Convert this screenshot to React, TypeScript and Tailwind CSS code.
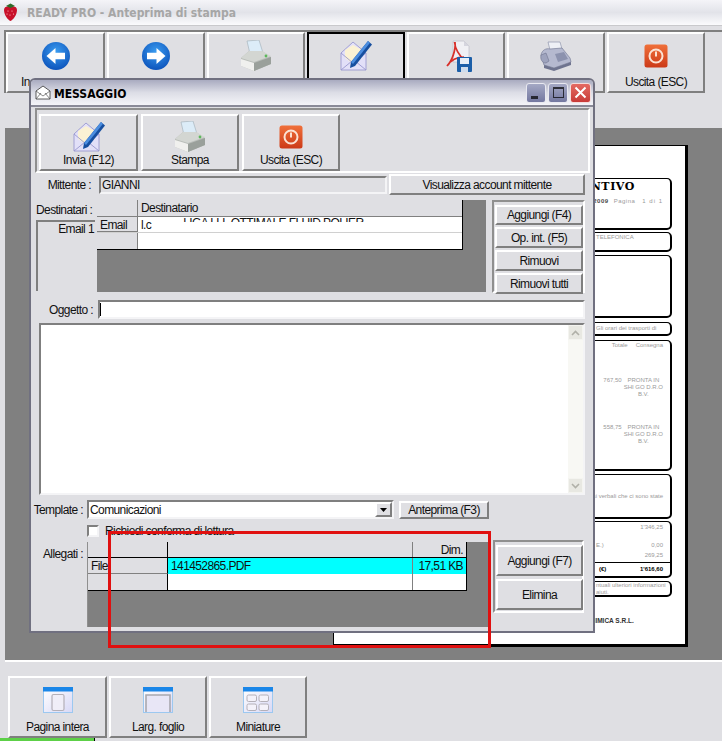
import React from "react";

const raised = "border-2 border-t-white border-l-white border-r-[#7f7f7f] border-b-[#7f7f7f] bg-[#dfdfe3]";
const sunken = "border-2 border-t-[#7f7f7f] border-l-[#7f7f7f] border-r-[#f4f4f6] border-b-[#f4f4f6]";

function Arrow({ dir }: { dir: "left" | "right" }) {
  return (
    <svg width="30" height="30" viewBox="0 0 30 30">
      <defs>
        <radialGradient id={"ag" + dir} cx="50%" cy="35%" r="70%">
          <stop offset="0" stopColor="#3a9cf0" />
          <stop offset="1" stopColor="#0a4fb8" />
        </radialGradient>
      </defs>
      <circle cx="15" cy="15" r="14" fill={"url(#ag" + dir + ")"} />
      <g transform={dir === "right" ? "matrix(-1 0 0 1 30 0)" : undefined}>
        <path d="M5.5 15 L14.5 7 V11.8 H24 V18.2 H14.5 V23 Z" fill="#fff" />
      </g>
    </svg>
  );
}

function Printer() {
  return (
    <svg width="32" height="32" viewBox="0 0 32 32">
      <path d="M7 1 L19 0 L23 13 L10 14 Z" fill="#dcecf8" stroke="#a8b4bd" strokeWidth="0.7" />
      <path d="M1 18 L9 11 H22 L31 17 V24 L14 31 L1 26 Z" fill="#b9bdb9" />
      <path d="M1 18 L14 22 L31 16 L22 11 H9 Z" fill="#d3d6d2" />
      <path d="M1 19 L14 23 V31 L1 26 Z" fill="#f0f0ee" />
      <path d="M14 23 L31 17 V24 L14 31 Z" fill="#9aa09b" />
      <circle cx="26" cy="16" r="1.4" fill="#5cb85c" />
    </svg>
  );
}

function MailPen() {
  return (
    <svg width="32" height="32" viewBox="0 0 32 32">
      <path d="M1 13 L13 2 L26 13 V30 H1 Z" fill="#e2e0f8" stroke="#9a98cf" strokeWidth="0.9" />
      <path d="M5 10 L13 5 L22 10 V18 L13 24 L5 18 Z" fill="#fbf2d4" />
      <path d="M1 13 L13 23 L26 13" fill="none" stroke="#9a98cf" strokeWidth="0.9" />
      <path d="M1 30 L12 21 M26 30 L15 21" stroke="#9a98cf" strokeWidth="0.9" />
      <path d="M28 1 L32 4.5 L15 26 L10 28 L11 22 Z" fill="#174f9f" />
      <path d="M28 1 L30 2.8 L13 24 L11 22 Z" fill="#4c8ee0" />
    </svg>
  );
}

function Power() {
  return (
    <svg width="24" height="24" viewBox="0 0 24 24">
      <defs>
        <linearGradient id="pw" x1="0" y1="0" x2="0" y2="1">
          <stop offset="0" stopColor="#f0703a" />
          <stop offset="1" stopColor="#cc3a18" />
        </linearGradient>
      </defs>
      <rect x="0.5" y="0.5" width="23" height="23" rx="2.5" fill="url(#pw)" />
      <circle cx="12" cy="12" r="6.5" fill="none" stroke="#fbe2d4" strokeWidth="2" />
      <path d="M12 7.5 V12.5" stroke="#fbe2d4" strokeWidth="2" />
    </svg>
  );
}

function Pdf() {
  return (
    <svg width="26" height="32" viewBox="0 0 26 32" className="ml-[6px]">
      <path d="M7 1 H18 L23 6 V22 H7 Z" fill="#f0f0f4" stroke="#c2c2cc" strokeWidth="0.8" />
      <path d="M18 1 V6 H23 Z" fill="#d5d5de" />
      <path d="M8.5 2 C9 8 13 16 18 19 M1 26 C5 20 11 17 18 17 M9 2 C10 10 6 21 1 26" fill="none" stroke="#d8302a" strokeWidth="1.7" />
      <rect x="11" y="17" width="15" height="15" rx="1" fill="#1c5fa8" />
      <rect x="14" y="18" width="9" height="6" fill="#e8eef6" />
      <rect x="15" y="27" width="7" height="5" fill="#cfdcec" />
    </svg>
  );
}

function Fax() {
  return (
    <svg width="32" height="30" viewBox="0 0 32 30">
      <path d="M8 1 L20 1 L22 8 L10 9 Z" fill="#eef0f6" stroke="#9096ae" strokeWidth="0.7" />
      <path d="M1 14 C2 9 6 7 10 8 L22 7 L30 17 L31 21 L14 27 L4 24 Z" fill="#b5b9cf" stroke="#7a7f9a" strokeWidth="0.7" />
      <path d="M4 24 L14 27 L31 21 V24 L14 30 L4 27 Z" fill="#6f748f" />
      <path d="M15 13 L24 11 L28 18 L18 21 Z" fill="#8c92ae" />
      <path d="M1 14 C0 18 2 22 6 22 L9 20 L6 12 Z" fill="#9ea3bd" stroke="#6f748f" strokeWidth="0.6" />
    </svg>
  );
}

function Strawberry() {
  return (
    <svg width="15" height="19" viewBox="0 0 15 19">
      <path d="M1 7 C1 3 5 3 7.5 4 C10 3 14 3 14 7 C14 12 10 17 7.5 18 C5 17 1 12 1 7 Z" fill="#c8102a" />
      <path d="M3 3 L7.5 0.5 L12 3 L7.5 5 Z" fill="#2f6a28" />
      <circle cx="5" cy="8" r="0.6" fill="#ffc6c6" /><circle cx="9" cy="8" r="0.6" fill="#ffc6c6" />
      <circle cx="7" cy="12" r="0.6" fill="#ffc6c6" /><circle cx="10.5" cy="11" r="0.6" fill="#ffc6c6" />
      <circle cx="4" cy="11" r="0.6" fill="#ffc6c6" />
    </svg>
  );
}

function MailSmall() {
  return (
    <svg width="16" height="16" viewBox="0 0 16 16">
      <path d="M1 6 L8 1 L15 6 V14 H1 Z" fill="#fff" stroke="#333" strokeWidth="0.8" />
      <path d="M1 14 L6 8 M15 14 L10 8 M1 6 L8 11 L15 6" fill="none" stroke="#555" strokeWidth="0.7" />
    </svg>
  );
}

function Layout({ kind }: { kind: "page" | "width" | "thumb" }) {
  return (
    <svg width="30" height="26" viewBox="0 0 30 26">
      <defs>
        <linearGradient id={"lg" + kind} x1="0" y1="0" x2="1" y2="1">
          <stop offset="0" stopColor="#fff" />
          <stop offset="1" stopColor="#d8d8f6" />
        </linearGradient>
      </defs>
      <rect x="0.5" y="0.5" width="29" height="25" fill={"url(#lg" + kind + ")"} stroke="#9cc8f0" />
      <rect x="0" y="0" width="30" height="4.5" fill="#1a86e8" />
      {kind === "page" && <rect x="9" y="7.5" width="12" height="16" rx="1.5" fill="#f0eef8" stroke="#b4b0b8" strokeWidth="1.2" />}
      {kind === "width" && <path d="M3 25 V8 H27 V25" fill="#e8e6f6" stroke="#a8a8ae" strokeWidth="1.6" />}
      {kind === "thumb" && (
        <g fill="#f4f2fa" stroke="#b4b0b8" strokeWidth="1">
          <rect x="4" y="8" width="9.5" height="6.5" rx="1.5" />
          <rect x="16" y="8" width="9.5" height="6.5" rx="1.5" />
          <rect x="4" y="17" width="9.5" height="6.5" rx="1.5" />
          <rect x="16" y="17" width="9.5" height="6.5" rx="1.5" />
        </g>
      )}
    </svg>
  );
}

function ToolBtn({ w, label, icon, active, iconH = "h-[34px]" }: { w: string; label?: string; icon: React.ReactNode; active?: boolean; iconH?: string }) {
  return (
    <div className={`${w} h-full flex flex-col items-center justify-between pt-[5px] pb-[2px] ${active ? "border-2 border-t-black border-l-black border-r-black border-b-[#7f7f7f] bg-[#dfdfe3]" : raised}`}>
      <div className={`${iconH} flex items-center justify-center`}>{icon}</div>
      <div className="leading-[14px] whitespace-nowrap">{label}</div>
    </div>
  );
}

function Btn({ className, children }: { className: string; children: React.ReactNode }) {
  return <div className={`${raised} flex items-center justify-center whitespace-nowrap ${className}`}>{children}</div>;
}

function DocBox({ h, mt, children }: { h: string; mt: string; children?: React.ReactNode }) {
  return (
    <div className={`${h} ${mt} w-[326px] ml-[12px] shrink-0 rounded-[5px] border border-black border-r-2 border-b-2 relative overflow-hidden text-[6px] leading-[7px] tracking-normal text-[#9a9a9a] whitespace-nowrap`}>
      {children}
    </div>
  );
}

function Line({ mt, children }: { mt: string; children: React.ReactNode }) {
  return <div className={`${mt} flex justify-end pr-[7px]`}>{children}</div>;
}

export default function App() {
  return (
    <div className="relative w-[722px] h-[741px] overflow-hidden bg-[#dfdfe3] text-[12px] tracking-[-0.6px] text-[#111] flex flex-col" style={{ fontFamily: '"Liberation Sans", Arial, sans-serif' }}>
      {/* main title */}
      <div className="h-[26px] shrink-0 flex items-center pl-[3px] gap-[9px] border-b border-[#c9c9cc] bg-gradient-to-b from-[#f4f4f8] via-[#e2e3e9] to-[#fbfbfd]">
        <Strawberry />
        <span className="text-[12px] tracking-normal font-bold text-[#a6a6a6]" style={{ fontFamily: '"DejaVu Sans Condensed", "DejaVu Sans", sans-serif' }}>READY PRO - Anteprima di stampa</span>
      </div>

      {/* main toolbar */}
      <div className="h-[102px] shrink-0 pl-[4px] pt-[4px]">
        <div className="h-[63px] flex gap-[2px] border-t-2 border-l-2 border-[#7f7f7f]">
          <div className={`w-[99px] h-full flex flex-col justify-between pt-[5px] pb-[2px] ${raised}`}>
            <div className="h-[34px] flex items-center justify-center"><Arrow dir="left" /></div>
            <div className="leading-[14px] pl-[13px]">In</div>
          </div>
          <ToolBtn w="w-[98px]" icon={<Arrow dir="right" />} />
          <ToolBtn w="w-[98px]" icon={<Printer />} />
          <ToolBtn w="w-[98px]" icon={<MailPen />} active />
          <ToolBtn w="w-[98px]" icon={<Pdf />} />
          <ToolBtn w="w-[98px]" icon={<Fax />} />
          <ToolBtn w="w-[98px]" label="Uscita (ESC)" icon={<Power />} />
        </div>
      </div>

      {/* preview area */}
      <div className="ml-[5px] h-[534px] shrink-0 bg-[#808080] border-b-2 border-white pt-[17px] pl-[328px]">
        <div className="w-[355px] h-[502px] bg-white border border-black border-r-[3px] border-b-[3px] flex flex-col">
          <DocBox h="h-[52px]" mt="mt-[32px]">
            <Line mt="mt-[1px]"><span className="pr-[28px] text-[11px] leading-[14px] font-bold tracking-[0.6px] text-black" style={{ fontFamily: '"DejaVu Serif", serif' }}>PREVENTIVO</span></Line>
            <Line mt="mt-[4px]"><span className="font-bold text-[#444] mr-[2px] tracking-[0.5px]">2009</span><span className="ml-[3px] tracking-[0.5px]">Pagina</span><span className="ml-[7px] tracking-[1px]">1 di 1</span></Line>
          </DocBox>
          <DocBox h="h-[20px]" mt="mt-[2px]">
            <div className="pl-[249px] mt-[1px]">TELEFONICA</div>
          </DocBox>
          <DocBox h="h-[63px]" mt="mt-[3px]" />
          <DocBox h="h-[14px]" mt="mt-[4px]">
            <div className="pl-[249px] mt-[2px]">Gli orari dei trasporti di</div>
          </DocBox>
          <DocBox h="h-[131px]" mt="mt-[4px]">
            <Line mt="mt-[1px]"><span>Totale</span><span className="ml-[8px]">Consegna</span></Line>
            <div className="absolute right-[7px] top-[36px] flex gap-[2px]"><span>767,50</span><span className="text-center">PRONTA IN<br />SHI GO D.R.O<br />B.V.</span></div>
            <div className="absolute right-[7px] top-[83px] flex gap-[2px]"><span>558,75</span><span className="text-center">PRONTA IN<br />SHI GO D.R.O<br />B.V.</span></div>
          </DocBox>
          <DocBox h="h-[45px]" mt="mt-[3px]">
            <Line mt="mt-[18px]"><span>si verbali che ci sono state</span></Line>
          </DocBox>
          <DocBox h="h-[57px]" mt="mt-[2px]">
            <Line mt="mt-[2px]"><span>1'346,25</span></Line>
            <Line mt="mt-[11px]"><span className="mr-auto pl-[249px]">E.)</span><span>0,00</span></Line>
            <Line mt="mt-[3px]"><span>269,25</span></Line>
            <div className="mt-[3px] border-t border-black flex justify-end pr-[7px] pt-[3px] text-black font-bold"><span className="mr-auto pl-[252px]">(€)</span><span>1'616,60</span></div>
          </DocBox>
          <DocBox h="h-[16px]" mt="mt-[3px]">
            <div className="pl-[249px]">ntuali ulteriori informazioni<br />aiuti.</div>
          </DocBox>
          <div className="mt-[19px] pl-[252px] text-[6.5px] tracking-normal font-bold text-[#333] whitespace-nowrap">CHIMICA S.R.L.</div>
        </div>
      </div>

      {/* bottom toolbar */}
      <div className="mt-[12px] h-[64px] shrink-0 pl-[8px] pt-[2px] flex gap-[2px]">
        <ToolBtn w="w-[99px]" label="Pagina intera" icon={<Layout kind="page" />} />
        <ToolBtn w="w-[98px]" label="Larg. foglio" icon={<Layout kind="width" />} />
        <ToolBtn w="w-[98px]" label="Miniature" icon={<Layout kind="thumb" />} />
      </div>
      <div className="w-[95px] h-[3px] bg-[#5dd048] border-r border-black" />

      {/* dialog window */}
      <div className="absolute left-[29px] top-[78px] w-[566px] h-[555px] rounded-t-[6px] border-2 border-[#707080] bg-[#dfdfe3] flex flex-col">
        <div className="h-[25px] shrink-0 flex items-center pl-[4px] pr-[2px] rounded-t-[4px] bg-gradient-to-b from-[#a9abc0] via-[#dcdde6] to-[#f4f4f8]">
          <MailSmall />
          <span className="ml-[3px] mt-[3px] font-bold text-[12px] tracking-normal text-black" style={{ fontFamily: '"DejaVu Sans Condensed", "DejaVu Sans", sans-serif' }}>MESSAGGIO</span>
          <div className="ml-auto flex gap-[2px]">
            <div className="w-[20px] h-[20px] rounded-[3px] border border-[#e8e8f0] bg-gradient-to-b from-[#a4a8c4] to-[#7478a0] flex items-end justify-center pb-[3px]"><div className="w-[7px] h-[3px] bg-black/70 mr-[4px]" /></div>
            <div className="w-[20px] h-[20px] rounded-[3px] border border-[#e8e8f0] bg-gradient-to-b from-[#a4a8c4] to-[#7478a0] flex items-center justify-center"><div className="w-[11px] h-[11px] border border-black/70 border-t-2" /></div>
            <div className="w-[21px] h-[20px] rounded-[3px] border border-[#f4dcdc] bg-gradient-to-b from-[#e46a62] to-[#c83a38] flex items-center justify-center">
              <svg width="13" height="13" viewBox="0 0 13 13"><path d="M1.5 1.5 L11.5 11.5 M11.5 1.5 L1.5 11.5" stroke="#fff" strokeWidth="2" /></svg>
            </div>
          </div>
        </div>

        <div className="flex-1 border-t-2 border-[#8a8a98] flex flex-col pl-[2px] pr-[3px]">
          {/* toolbar */}
          <div className="ml-[2px] mt-[1px] h-[65px] flex gap-[3px] pl-[2px] pt-[2px] border-t-2 border-l-2 border-[#8f8f8f] border-r-2 border-r-white border-b-2 border-b-white">
            <div className="h-[57px] mt-[2px]"><ToolBtn w="w-[99px]" label="Invia (F12)" icon={<MailPen />} iconH="h-[33px]" /></div>
            <div className="h-[57px] mt-[2px]"><ToolBtn w="w-[98px]" label="Stampa" icon={<Printer />} iconH="h-[33px]" /></div>
            <div className="h-[57px] mt-[2px]"><ToolBtn w="w-[98px]" label="Uscita (ESC)" icon={<Power />} iconH="h-[33px]" /></div>
          </div>

          {/* mittente */}
          <div className="mt-[1px] h-[21px] flex items-center">
            <div className="w-[58px] text-right">Mittente :</div>
            <div className={`ml-[8px] w-[288px] h-[18px] ${sunken} leading-[14px] pl-[1px]`}>GIANNI</div>
            <Btn className="ml-[2px] w-[196px] h-[21px]">Visualizza account mittente</Btn>
          </div>

          {/* destinatari */}
          <div className="mt-[5px] h-[93px] flex">
            <div className="w-[64px] pl-[3px] flex flex-col">
              <div className="h-[20px] leading-[20px] whitespace-nowrap">Destinatari :</div>
              <div className={`w-[59px] h-[71px] ${sunken} border-r-0 border-b-0 text-right leading-[14px] pr-[1px] whitespace-nowrap`}>Email 1</div>
            </div>
            <div className="w-[389px] h-[92px] bg-[#808080]">
              <div className="w-[366px] border-r border-b border-black bg-white">
                <div className="flex h-[17px] bg-[#dfdfe3] border-b border-[#808080]">
                  <div className="w-[41px] border-r border-[#808080]" />
                  <div className="pl-[3px] leading-[17px]">Destinatario</div>
                </div>
                <div className="flex h-[16px] border-b border-[#d0d0d0]">
                  <div className="w-[41px] bg-[#dfdfe3] border-r border-[#808080] border-b border-b-[#808080] pl-[3px] leading-[16px]">Email</div>
                  <div className="pl-[3px] leading-[16px] flex items-start relative">
                    <span>l.c</span>
                    <span className="block ml-[32px] mt-[1px] h-[4px] overflow-hidden whitespace-nowrap leading-[10px]">LIGA LLL OTTIMALE FLUID POLIER</span>
                  </div>
                </div>
                <div className="flex h-[16px]">
                  <div className="w-[41px] bg-[#dfdfe3] border-r border-[#808080]" />
                </div>
              </div>
            </div>
            <div className="ml-[6px] w-[93px] h-[93px] border-2 border-t-[#8f8f8f] border-l-[#8f8f8f] border-r-white border-b-white pl-[1px] pt-[3px] flex flex-col gap-[2px]">
              <Btn className="w-[88px] h-[20px]">Aggiungi (F4)</Btn>
              <Btn className="w-[88px] h-[21px]">Op. int. (F5)</Btn>
              <Btn className="w-[88px] h-[21px]">Rimuovi</Btn>
              <Btn className="w-[88px] h-[21px]">Rimuovi tutti</Btn>
            </div>
          </div>

          {/* oggetto */}
          <div className="mt-[7px] h-[19px] flex items-center">
            <div className="w-[60px] text-right">Oggetto :</div>
            <div className={`ml-[5px] w-[487px] h-[19px] bg-white ${sunken}`}><div className="w-px h-[13px] bg-black mt-[1px]" /></div>
          </div>

          {/* memo */}
          <div className={`mt-[4px] ml-[6px] w-[546px] h-[172px] bg-white ${sunken} flex justify-end`}>
            <div className="w-[15px] h-full bg-[#f8f8f4] flex flex-col justify-between">
              <div className="h-[15px] bg-[#e8e8e2] border border-[#f4f4f0] flex items-center justify-center"><svg width="9" height="6" viewBox="0 0 9 6"><path d="M1 5 L4.5 1.5 L8 5" fill="none" stroke="#b0b0a8" strokeWidth="1.6" /></svg></div>
              <div className="h-[15px] bg-[#e8e8e2] border border-[#f4f4f0] flex items-center justify-center"><svg width="9" height="6" viewBox="0 0 9 6"><path d="M1 1 L4.5 4.5 L8 1" fill="none" stroke="#b0b0a8" strokeWidth="1.6" /></svg></div>
            </div>
          </div>

          {/* template */}
          <div className="mt-[5px] h-[19px] flex items-center">
            <div className="w-[50px] text-right whitespace-nowrap">Template :</div>
            <div className={`ml-[4px] w-[307px] h-[19px] bg-white ${sunken} flex justify-between`}>
              <span className="pl-[1px] leading-[17px]">Comunicazioni</span>
              <div className={`w-[17px] h-[15px] ${raised} border flex items-center justify-center`}><svg width="7" height="4" viewBox="0 0 7 4"><path d="M0 0 H7 L3.5 4 Z" fill="#000" /></svg></div>
            </div>
            <Btn className="ml-[5px] w-[90px] h-[18px]">Anteprima (F3)</Btn>
          </div>

          {/* checkbox */}
          <div className="mt-[6px] h-[12px] flex items-center pl-[54px]">
            <div className={`w-[12px] h-[12px] bg-white ${sunken}`} />
            <span className="ml-[6px] whitespace-nowrap">Richiedi conferma di lettura</span>
          </div>

          {/* allegati */}
          <div className="mt-[3px] h-[87px] flex">
            <div className="w-[50px] text-right pt-[5px] whitespace-nowrap">Allegati :</div>
            <div className="ml-[4px] mt-[2px] w-[402px] h-[85px] bg-[#808080] border-l border-[#8f8f8f]">
              <div className="w-[379px] bg-white border-r border-b border-black">
                <div className="flex h-[16px] bg-[#dfdfe3] border-b border-black">
                  <div className="w-[80px] border-r border-black" />
                  <div className="flex-1" />
                  <div className="w-[54px] border-l border-[#808080] text-right pr-[3px] leading-[17px]">Dim.</div>
                </div>
                <div className="flex h-[16px] bg-[#00ffff]">
                  <div className="w-[80px] bg-[#dfdfe3] border-r border-black border-b border-b-[#808080] pl-[3px] leading-[16px]">File</div>
                  <div className="flex-1 pl-[3px] leading-[16px]">141452865.PDF</div>
                  <div className="w-[54px] border-l border-[#808080] text-right pr-[3px] leading-[16px] whitespace-nowrap">17,51 KB</div>
                </div>
                <div className="flex h-[16px]">
                  <div className="w-[80px] bg-[#dfdfe3] border-r border-black" />
                  <div className="flex-1" />
                  <div className="w-[54px] border-l border-[#808080]" />
                </div>
              </div>
            </div>
            <div className="ml-[4px] w-[91px] h-[73px] border-2 border-t-[#8f8f8f] border-l-[#8f8f8f] border-r-white border-b-white pl-[1px] pt-[3px] flex flex-col gap-[3px]">
              <Btn className="w-[87px] h-[31px]">Aggiungi (F7)</Btn>
              <Btn className="w-[87px] h-[31px]">Elimina</Btn>
            </div>
          </div>
        </div>
      </div>

      {/* red annotation */}
      <div className="absolute left-[108px] top-[531px] w-[383px] h-[117px] border-[3px] border-[#e01010]" />
    </div>
  );
}
